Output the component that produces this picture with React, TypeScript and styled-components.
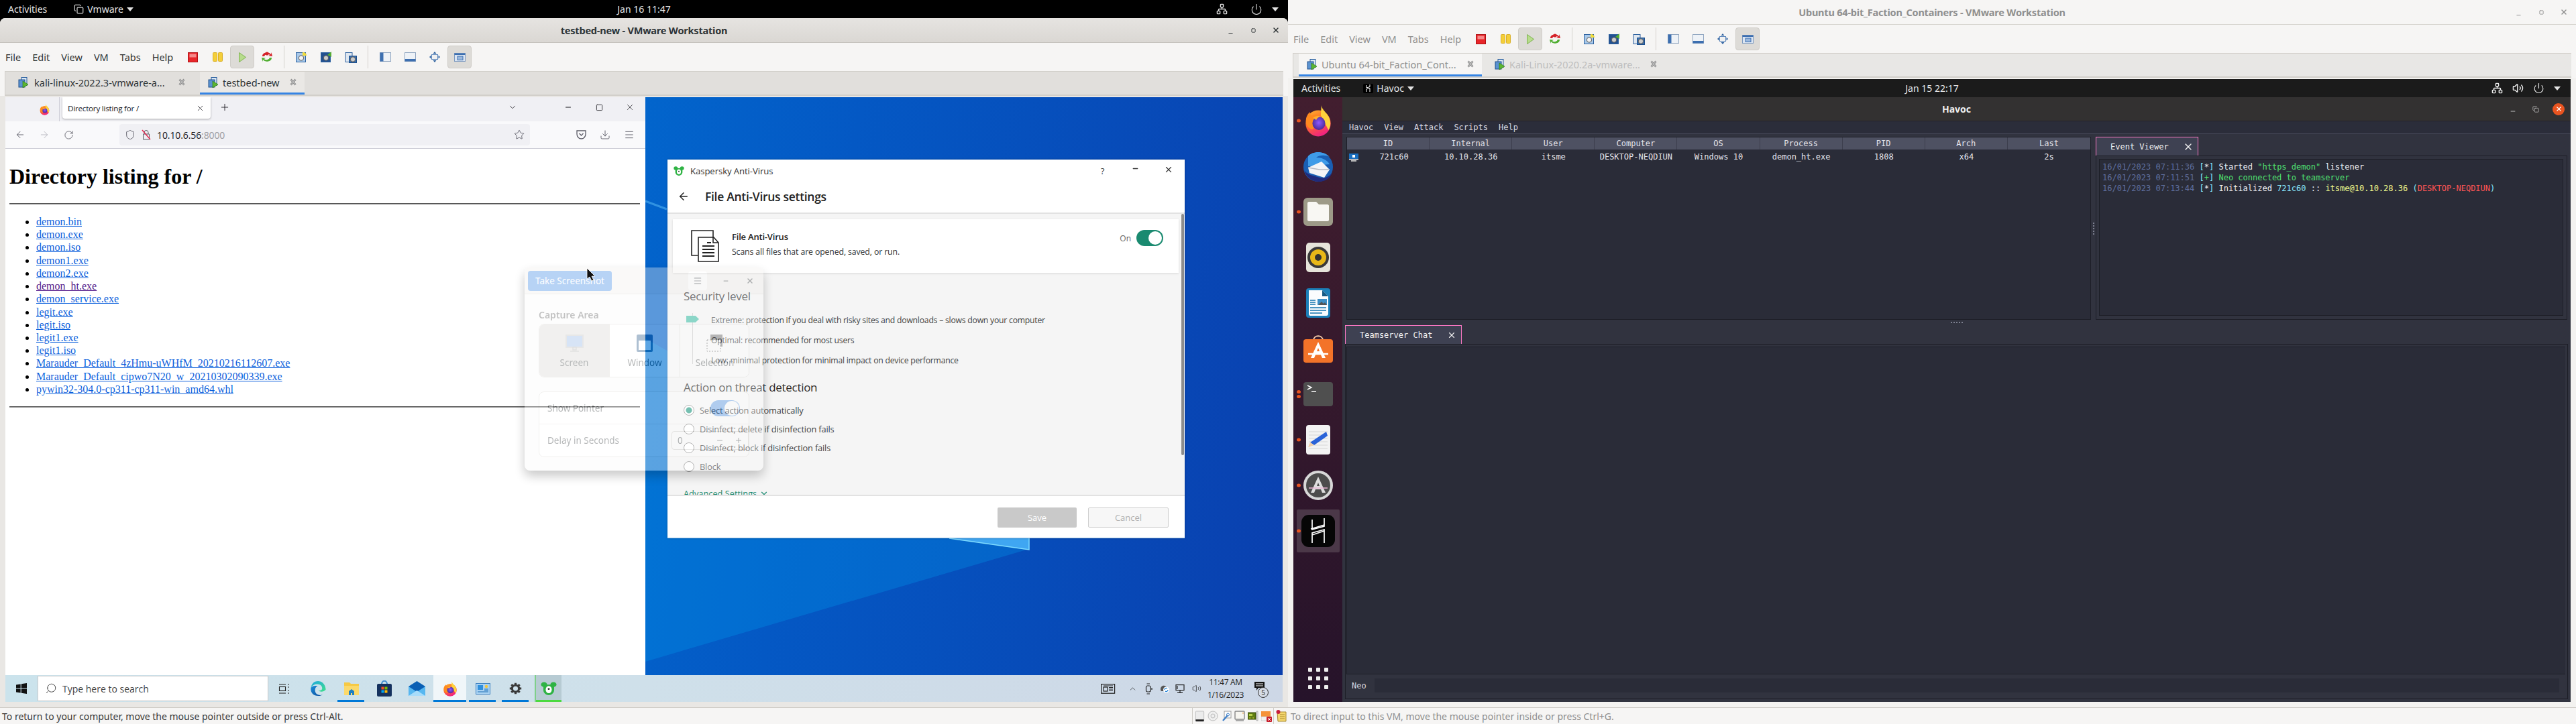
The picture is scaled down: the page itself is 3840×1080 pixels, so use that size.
import React from 'react';
import styled, { createGlobalStyle } from 'styled-components';
import { ArrowLeft, ArrowRight, RotateCw, Shield, Star, Download, Menu as MenuIcon, Plus, ChevronDown, X, Minus, Square, Search, Network, Power, Volume2, Copy, ChevronUp } from 'lucide-react';

const Global = createGlobalStyle`
  html, body { margin: 0; padding: 0; width: 3840px; height: 1080px; overflow: hidden; background: #000; }
  * { box-sizing: border-box; }
  #root { width: 3840px; height: 1080px; }
`;

const ui = `"Noto Sans", "Liberation Sans", sans-serif`;
const win = `"Open Sans", "Liberation Sans", sans-serif`;
const mono = `"DejaVu Sans Mono", "Liberation Mono", monospace`;
const serif = `"Liberation Serif", serif`;

const Screen = styled.div`display: grid; grid-template-columns: 1920px 1920px; height: 1080px; font-family: ${ui};`;
const LeftHost = styled.div`display: flex; flex-direction: column; background: #000; height: 1080px; min-width: 0;`;

const TopBar = styled.div<{ $dark?: boolean }>`
  display: grid; grid-template-columns: 1fr auto 1fr; align-items: center; height: 27px; flex: none;
  background: ${p => (p.$dark ? '#1b1b1b' : '#000')}; color: #e4e4e4; font-size: 14px; font-family: ${ui};
`;
const BarLeft = styled.div<{ $pad: number; $gap: number }>`display: flex; align-items: center; padding-left: ${p => p.$pad}px; gap: ${p => p.$gap}px;`;
const BarApp = styled.div`display: flex; align-items: center; gap: 5px;`;
const BarRight = styled.div<{ $pad: number }>`display: flex; align-items: center; justify-content: flex-end; gap: 14px; padding-right: ${p => p.$pad}px;`;
const Caret = styled.span`width: 0; height: 0; border-left: 5px solid transparent; border-right: 5px solid transparent; border-top: 6px solid #e4e4e4;`;

const HostWindow = styled.div<{ $on?: boolean }>`
  flex: 1; display: flex; flex-direction: column; min-height: 0; height: 100%;
  background: #f6f5f4; border-radius: ${p => (p.$on ? '8px 8px 0 0' : '0')}; overflow: hidden;
  color: ${p => (p.$on ? '#2e3436' : '#8f8f8f')};
`;
const TitleBar = styled.div<{ $on?: boolean }>`
  height: 37px; flex: none; display: grid; grid-template-columns: 1fr auto 1fr; align-items: center;
  background: ${p => (p.$on ? 'linear-gradient(#e6e4e1,#dad7d3)' : '#f6f5f4')};
  border-bottom: 1px solid ${p => (p.$on ? '#c4c1bc' : '#d8d5d0')};
`;
const TitleText = styled.div`grid-column: 2; font-size: 14.5px; font-weight: 700; letter-spacing: -0.2px; white-space: nowrap;`;
const WinControls = styled.div`grid-column: 3; display: flex; justify-content: flex-end; padding-right: 1px;`;
const WinControl = styled.span`width: 34px; display: flex; align-items: center; justify-content: center;`;
const Toolbar = styled.div`height: 42px; flex: none; display: flex; align-items: center; background: #f6f5f4; padding-left: 8px;`;
const MenuList = styled.div`width: 261px; display: flex; gap: 17px; font-size: 14.5px; flex: none;`;
const MenuLabel = styled.span``;
const ToolBtn = styled.span<{ $active?: boolean }>`
  width: 36px; height: 34px; margin-right: 1px; display: flex; align-items: center; justify-content: center; border-radius: 4px;
  background: ${p => (p.$active ? '#dddbd7' : 'transparent')}; border: 1px solid ${p => (p.$active ? '#cfccc7' : 'transparent')};
`;
const ToolSep = styled.span`width: 1px; height: 34px; background: #d4d1cc; margin: 0 7px 0 6px;`;
const TabBar = styled.div<{ $on?: boolean; $pad: number }>`
  height: 37px; flex: none; display: flex; margin-left: 7px; margin-right: 7px; padding-left: ${p => p.$pad}px;
  background: ${p => (p.$on ? '#e1dfdc' : '#e8e7e5')}; border-top: 1px solid #d2cfca; border-left: 1px solid #d2cfca; border-bottom: 2px solid #d2cfca;
`;
const HostTab = styled.div<{ $w: number; $active?: boolean; $on?: boolean }>`
  width: ${p => p.$w}px; display: flex; align-items: center; padding-left: ${p => (p.$active ? 12 : 19)}px; padding-right: ${p => (p.$active ? 12 : 22)}px;
  background: ${p => (p.$active ? (p.$on ? '#eae8e5' : '#f6f5f4') : 'transparent')};
  border-bottom: 3px solid ${p => (p.$active ? '#3584e4' : 'transparent')};
`;
const TabTitle = styled.span<{ $dim?: boolean; $gap?: number }>`margin-left: ${p => p.$gap ?? 6}px; font-size: 14.5px; white-space: nowrap; color: ${p => (p.$dim ? '#bdbdbd' : 'inherit')};`;
const TabClose = styled.span`margin-left: auto; display: flex; color: #8a8a8a;`;
const Well = styled.div<{ $on?: boolean }>`flex: 1; min-height: 0; padding: 2px 8px 8px; display: flex; flex-direction: column; background: ${p => (p.$on ? '#e9e7e4' : '#f3f2f0')};`;
const StatusBar = styled.div`height: 25px; flex: none; border-top: 1px solid #cfccc7; display: flex; align-items: center; background: #f6f5f4; font-size: 14px;`;
const StatusText = styled.span<{ $dim?: boolean }>`padding-left: ${p => (p.$dim ? 4 : 3)}px; white-space: nowrap; color: ${p => (p.$dim ? '#8f8f8f' : '#3a3a3a')};`;
const StatusIcons = styled.div`margin-left: auto; height: 100%; display: flex; align-items: center; border-left: 1px solid #cfccc7;`;
const StatusIcon = styled.span`width: 20px; display: flex; justify-content: center;`;
const StatusNote = styled.span`width: 22px; display: flex; justify-content: center; border-left: 1px solid #cfccc7; height: 100%; align-items: center;`;

/* Windows guest */
const Guest = styled.div`flex: 1; min-height: 0; display: flex; flex-direction: column; position: relative; overflow: hidden;
  background: linear-gradient(100deg, #0092e8 0%, #0074d6 28%, #0458c4 62%, #0a3fae 100%);`;
const WallpaperArt = styled.svg`position: absolute; left: 0; top: 0; width: 1904px; height: 902px;`;
const GuestArea = styled.div`flex: 1; min-height: 0; display: flex; position: relative;`;
const Firefox = styled.div`width: 954px; display: flex; flex-direction: column; background: #fff; position: relative; font-family: ${win};`;
const FfTabs = styled.div`height: 36px; flex: none; display: flex; align-items: flex-start; background: #f0f0f4; color: #15141a;`;
const FfLogoBox = styled.div`width: 81px; height: 36px; display: flex; align-items: center; justify-content: center; padding-left: 37px; border-right: 1px solid #cfcfd8;`;
const FfTab = styled.div`width: 221px; height: 32px; margin-left: 4px; background: #fff; border-radius: 0 0 4px 4px; box-shadow: 0 1px 3px rgba(0,0,0,.3); display: flex; align-items: center; padding: 0 9px 0 8px; font-size: 11.6px; letter-spacing: -0.2px; justify-content: space-between;`;
const FfPlus = styled.span`margin-left: 13px; height: 30px; display: flex; align-items: center;`;
const FfSpacer = styled.span`flex: 1;`;
const FfCtl = styled.span<{ $mr?: number }>`width: 46px; height: 30px; display: flex; align-items: center; justify-content: center; margin-right: ${p => p.$mr || 0}px;`;
const FfNav = styled.div`height: 41px; flex: none; display: flex; align-items: center; background: #f9f9fb; border-bottom: 1px solid #cfcfd8; color: #5b5b66;`;
const FfNavBtn = styled.span<{ $dim?: boolean }>`width: 36px; display: flex; justify-content: center; color: ${p => (p.$dim ? '#b6b6bd' : '#5b5b66')};`;
const UrlBar = styled.div`width: 612px; height: 32px; margin-left: 58px; border-radius: 4px; background: #f0f0f4; display: flex; align-items: center; padding: 0 8px; gap: 8px; margin-right: 58px;`;
const UrlText = styled.span`font-size: 14px; color: #15141a; letter-spacing: -0.1px;`;
const UrlPort = styled.span`color: #9a9aa0;`;
const UrlStar = styled.span`margin-left: auto; display: flex;`;
const Page = styled.div`flex: 1; min-height: 0; background: #fff; padding: 0 8px 0 6px; font-family: ${serif}; color: #000; overflow: hidden;`;
const PageTitle = styled.h1`font-size: 32px; font-weight: 700; margin: 23px 0 21px; line-height: 37px;`;
const PageRule = styled.hr`margin: 0; border: 0; border-top: 1px solid #555; border-bottom: 1px solid #8a8a8a;`;
const FileList = styled.ul`margin: 16px 0; padding-left: 40px; font-size: 16px;`;
const FileItem = styled.li`height: 19.23px; line-height: 19.23px;`;
const FileLink = styled.a<{ $seen?: boolean }>`color: ${p => (p.$seen ? '#551a8b' : '#0b5fdc')}; text-decoration: underline;`;

/* Kaspersky */
const Kaspersky = styled.div`position: absolute; left: 987px; top: 93px; width: 771px; height: 565px; background: #fff; display: flex; flex-direction: column; font-family: ${win}; color: #222; border-bottom: 1px solid #9cc5e8; box-shadow: 0 0 3px rgba(0,0,0,.25);`;
const KHead = styled.div`height: 81px; flex: none; border-bottom: 2px solid #e2e2e2; padding: 0 0 0 9px; display: flex; flex-direction: column;`;
const KTitleRow = styled.div`height: 34px; display: flex; align-items: center; font-size: 13.2px; letter-spacing: -0.1px; color: #333; gap: 9px;`;
const KCtl = styled.span`width: 49px; text-align: center; display: flex; justify-content: center;`;
const KCtlGroup = styled.div`margin-left: auto; display: flex;`;
const KHeading = styled.div`display: flex; align-items: center; height: 42px; padding-left: 6px; font-size: 17.5px; font-weight: 600; letter-spacing: -0.3px; gap: 23px;`;
const KBody = styled.div`flex: 1; min-height: 0; background: #f5f5f5; position: relative; overflow: hidden; padding: 8px 9px 0 8px;`;
const KCard = styled.div`height: 80px; background: #fff; box-shadow: 0 1px 3px rgba(0,0,0,.12); display: flex; align-items: flex-start; padding: 16px 23px 0 27px;`;
const KCardText = styled.div`margin-left: 19px; flex: 1;`;
const KCardName = styled.div`font-size: 13px; font-weight: 600; letter-spacing: -0.2px; line-height: 20px;`;
const KCardDesc = styled.div`font-size: 12.3px; letter-spacing: -0.12px; margin-top: 4px; line-height: 18px; color: #333;`;
const KOnLabel = styled.span`font-size: 12px; color: #666; margin: 4px 8px 0 0;`;
const KToggle = styled.span`width: 40px; height: 24px; border-radius: 12px; background: #1a8a70; display: flex; justify-content: flex-end; align-items: center; padding-right: 2px;`;
const KKnob = styled.span`width: 20px; height: 20px; border-radius: 50%; background: #fff;`;
const KSection = styled.div<{ $top: number }>`font-size: 17px; font-weight: 500; line-height: 24px; color: #2b2b2b; margin: ${p => p.$top}px 0 0 16px; letter-spacing: -0.3px;`;
const KLevels = styled.div`position: relative; padding-left: 57px; margin-top: 9px;`;
const KLevel = styled.div`height: 30px; line-height: 30px; font-size: 12.2px; letter-spacing: -0.22px; color: #444;`;
const KTrack = styled.span`position: absolute; left: 29px; top: 4px; width: 1px; height: 76px; background: #c9c9c9;`;
const KThumb = styled.span`position: absolute; left: 20px; top: 8px; width: 19px; height: 10px; background: #4fc3ad; clip-path: polygon(0 0, 72% 0, 100% 50%, 72% 100%, 0 100%);`;
const KRadios = styled.div`margin: 8px 0 0 16px;`;
const KRadioRow = styled.div`height: 28px; display: flex; align-items: center; gap: 8px; font-size: 12.8px; color: #444; letter-spacing: -0.15px;`;
const KRadio = styled.span<{ $on?: boolean }>`width: 16px; height: 16px; border-radius: 50%; border: 1px solid #8c8c8c; background: ${p => (p.$on ? 'radial-gradient(circle, #2a9d86 0 4px, #fff 5px)' : '#fff')};`;
const KAdvanced = styled.div`margin: 16px 0 0 16px; color: #1a8a70; font-size: 12.8px; line-height: 20px; display: flex; align-items: center; gap: 4px;`;
const KScroll = styled.span`position: absolute; right: 1px; top: 0; width: 4px; height: 360px; background: #8c8c8c; border-radius: 2px;`;
const KFoot = styled.div`height: 64px; flex: none; border-top: 2px solid #e2e2e2; display: flex; align-items: flex-start; justify-content: flex-end; gap: 17px; padding: 17px 24px 0 0;`;
const KBtn = styled.span<{ $primary?: boolean }>`
  height: 30px; width: ${p => (p.$primary ? 118 : 120)}px; border-radius: 2px; display: flex; align-items: center; justify-content: center; font-size: 13px;
  background: ${p => (p.$primary ? '#c9c9c9' : '#f7f7f7')}; color: ${p => (p.$primary ? '#fff' : '#b0b0b0')}; border: ${p => (p.$primary ? 'none' : '1px solid #cfcfcf')};
`;

/* fading gnome screenshot dialog */
const ShotDialog = styled.div`position: absolute; left: 774px; top: 254px; width: 356px; height: 303px; background: #fafafa; opacity: .36; border-radius: 8px; box-shadow: 0 8px 16px rgba(0,0,0,.6); display: flex; flex-direction: column; font-family: ${ui}; color: #2e3436;`;
const ShotHead = styled.div`height: 40px; flex: none; display: flex; align-items: center; padding: 0 2px 0 5px; border-bottom: 1px solid #d8d5d0; background: #f0eeec; border-radius: 8px 8px 0 0;`;
const ShotBtn = styled.span`width: 125px; height: 30px; background: #3584e4; color: #fff; border-radius: 4px; font-size: 13.5px; display: flex; align-items: center; justify-content: center;`;
const ShotMenu = styled.span`width: 28px; height: 28px; margin-left: auto; background: #fff; border-radius: 4px; display: flex; align-items: center; justify-content: center;`;
const ShotCtl = styled.span`width: 36px; display: flex; justify-content: center;`;
const ShotBody = styled.div`flex: 1; padding: 21px 21px 0;`;
const ShotLabel = styled.div`font-size: 14px; line-height: 20px; font-weight: 600; color: #555;`;
const ShotSeg = styled.div`display: grid; grid-template-columns: 105px 105px 104px; height: 80px; margin-top: 3px; border: 1px solid #d8d5d0; border-radius: 8px; overflow: hidden; background: #fff;`;
const ShotOpt = styled.div<{ $on?: boolean }>`display: flex; flex-direction: column; align-items: center; justify-content: center; gap: 7px; padding-top: 2px; font-size: 13.5px; line-height: 18px; background: ${p => (p.$on ? '#d8d6d2' : '#fff')}; border-right: 1px solid #d8d5d0;`;
const ShotList = styled.div`margin-top: 21px; border: 1px solid #d8d5d0; border-radius: 8px; background: #fff;`;
const ShotRow = styled.div`height: 48px; display: flex; align-items: center; padding: 0 12px; font-size: 13.5px; justify-content: space-between; border-bottom: 1px solid #e3e1de; &:last-child { border-bottom: 0; padding-right: 0; }`;
const ShotSwitch = styled.span`width: 44px; height: 24px; border-radius: 12px; background: #3584e4; display: flex; justify-content: flex-end; padding: 1px; margin-right: 1px;`;
const ShotSwitchKnob = styled.span`width: 22px; height: 22px; background: #fff; border-radius: 50%;`;
const ShotSpin = styled.span`width: 115px; height: 28px; border: 1px solid #c8c5c0; border-radius: 4px; display: flex; align-items: center; justify-content: space-between; padding: 0 8px;`;
const CursorArt = styled.svg`position: absolute; left: 866px; top: 255px;`;

/* taskbar */
const Taskbar = styled.div`height: 40px; flex: none; display: flex; align-items: center; position: relative; font-family: ${win}; background: linear-gradient(90deg, #cbe3ec, #cfe0ea 50%, #cdd7e6 100%);`;
const StartBtn = styled.span`width: 48px; display: flex; justify-content: center;`;
const SearchBox = styled.div`width: 344px; height: 38px; background: #fff; border: 1px solid #c8c8c8; display: flex; align-items: center; gap: 8px; padding-left: 10px; color: #444; font-size: 14px;`;
const TaskView = styled.span`width: 46px; margin-right: 4px; display: flex; justify-content: center;`;
const TaskItem = styled.span<{ $run?: boolean; $cur?: boolean; $kas?: boolean }>`
  width: 49px; height: 40px; display: flex; align-items: center; justify-content: center; position: relative;
  background: ${p => (p.$cur ? 'rgba(255,255,255,.7)' : p.$kas ? '#b7cbd3' : 'transparent')};
  ${p => (p.$kas ? 'margin-left: 4px; width: 40px; border-left: 2px solid #7fd08a; margin-right: 5px;' : '')}
  &::after { content: ''; display: ${p => (p.$run || p.$kas ? 'block' : 'none')}; position: absolute; bottom: 0; left: ${p => (p.$cur || p.$kas ? 0 : 4)}px; right: ${p => (p.$cur || p.$kas ? 0 : 5)}px; height: 3px; background: ${p => (p.$kas ? '#4cd93f' : '#0078d7')}; }
`;
const Tray = styled.div`margin-left: auto; display: flex; align-items: center; padding-right: 22px;`;
const TrayBox = styled.span<{ $ml?: number }>`width: 24px; display: flex; justify-content: center; margin-left: ${p => p.$ml || 0}px;`;
const TrayClock = styled.div`width: 62px; text-align: center; font-size: 12px; line-height: 19px; color: #222; letter-spacing: -0.3px;`;
const TrayNote = styled.span`width: 20px; height: 28px; margin-left: 12px; position: relative; display: block;`;
const TrayBadge = styled.span`position: absolute; left: 5px; top: 12px; width: 16px; height: 16px; border-radius: 50%; border: 1px solid #333; font-size: 10px; display: flex; align-items: center; justify-content: center; background: #d5dbe6; color: #222;`;

/* Ubuntu guest */
const UbuntuDesk = styled.div`flex: 1; display: flex; min-height: 0; background: #2b2d39;`;
const Dock = styled.div`width: 73px; flex: none; display: flex; flex-direction: column; align-items: center; padding-top: 1px; background: linear-gradient(#421e2f, #26132a);`;
const DockItem = styled.div<{ $on?: boolean }>`width: 64px; height: 68px; display: flex; align-items: center; justify-content: center; position: relative; ${p => (p.$on ? 'background: #4b3848; border-radius: 2px; height: 64px; margin-top: 2px;' : '')}`;
const DockDots = styled.span`position: absolute; left: 0; top: 50%; transform: translateY(-50%); display: flex; flex-direction: column; gap: 2px;`;
const DockDot = styled.span`width: 6px; height: 5px; border-radius: 50%; background: #e95420;`;
const AppGrid = styled.div`margin-top: auto; margin-bottom: 19px; display: grid; grid-template-columns: repeat(3, 6px); gap: 7px 6px;`;
const AppDot = styled.span`width: 6px; height: 6px; background: #eee; border-radius: 1px;`;
const Havoc = styled.div`flex: 1; min-width: 0; display: flex; flex-direction: column; background: #31333f; font-family: ${mono}; font-size: 12px; color: #d9d9e0;`;
const HavocTitle = styled.div`height: 36px; flex: none; background: #333131; display: grid; grid-template-columns: 1fr auto 1fr; align-items: center; color: #eee; border-bottom: 1px solid #22232b;`;
const HavocName = styled.div`grid-column: 2; font-family: ${ui}; font-weight: 700; font-size: 14px;`;
const HavocCtls = styled.div`grid-column: 3; display: flex; justify-content: flex-end; align-items: center; padding-right: 9px; gap: 16px;`;
const HavocCtl = styled.span`width: 18px; display: flex; justify-content: center; color: #ddd;`;
const HavocClose = styled.span`width: 18px; height: 18px; border-radius: 50%; background: #e95420; color: #fff; display: flex; align-items: center; justify-content: center;`;
const HavocMenu = styled.div`height: 19px; flex: none; display: flex; align-items: center; gap: 16px; padding-left: 10px; background: #2b2d3a; border-bottom: 1px solid #454757;`;
const TopSplit = styled.div`height: 277px; flex: none; display: flex; padding: 4px 5px 0 6px;`;
const SessionPane = styled.div`width: 1110px; flex: none; background: #2a2c38; border: 1px solid #1d1e27;`;
const SessionHead = styled.div`display: grid; grid-template-columns: repeat(9, 1fr); height: 18px; background: #4e5162; color: #e3e3ea;`;
const SessionHeadCell = styled.div`text-align: center; line-height: 18px; border-right: 1px solid #3c3e4d; &:last-child { border-right: 0; }`;
const SessionRow = styled.div`display: grid; grid-template-columns: repeat(9, 1fr); height: 22px; align-items: center; padding-top: 1px;`;
const SessionCell = styled.div`text-align: center; line-height: 19px; color: #e3e3ea; display: flex; align-items: center; justify-content: center; white-space: nowrap;`;
const SessionIdText = styled.span`flex: 1; text-align: center;`;
const VGrip = styled.div`width: 7px; flex: none; display: flex; align-items: center; justify-content: center;`;
const VGripDots = styled.span`width: 2px; height: 18px; border-left: 2px dotted #7d8090;`;
const EventPane = styled.div`flex: 1; min-width: 0; display: flex; flex-direction: column; height: 273px;`;
const PaneTabs = styled.div`display: flex; height: 28px; flex: none;`;
const PaneTab = styled.div<{ $w: number; $pl: number; $pr: number }>`
  width: ${p => p.$w}px; height: 28px; background: #3e4152; border: 1px solid #ff79c6; border-bottom: 0; display: flex; align-items: center; justify-content: space-between;
  padding: 0 ${p => p.$pr}px 0 ${p => p.$pl}px; color: #f0f0f0;
`;
const PaneBody = styled.div`flex: 1; min-height: 0; border: 1px solid #1d1e27; padding: 4px 5px 5px 4px; background: #31333f;`;
const LogBox = styled.div`height: 100%; background: #2a2c38; border: 1px solid #1d1e27; padding: 3px 4px;`;
const LogLine = styled.div`line-height: 16px; white-space: pre;`;
const LogSpan = styled.span<{ $c: string }>`color: ${p => p.$c};`;
const HGrip = styled.div`height: 8px; flex: none; display: flex; align-items: center; justify-content: center;`;
const HGripDots = styled.span`width: 18px; height: 2px; border-top: 2px dotted #7d8090;`;
const ChatPane = styled.div`flex: 1; min-height: 0; display: flex; flex-direction: column; padding: 0 4px;`;
const ChatBody = styled.div`flex: 1; min-height: 0; display: flex; flex-direction: column; border: 1px solid #1d1e27; padding: 3px 3px 3px 1px; margin-bottom: 4px;`;
const ChatLog = styled.div`flex: 1; background: #2a2c38; border: 1px solid #1d1e27; border-right: 0;`;
const ChatInputRow = styled.div`height: 33px; flex: none; display: flex; align-items: center; padding: 0 9px 0 8px; gap: 12px;`;
const ChatInput = styled.div`flex: 1; height: 21px; background: #2a2c38;`;

/* ---------- icons ---------- */
const FirefoxLogo = ({ w = 24, h = 24 }: { w?: number; h?: number }) => (
  <svg width={w} height={h} viewBox="0 0 48 48" preserveAspectRatio="none">
    <defs>
      <linearGradient id="ffa" x1="0" y1="0" x2="0.5" y2="1"><stop offset="0" stopColor="#ffbd2e" /><stop offset=".5" stopColor="#ff6a2a" /><stop offset="1" stopColor="#f0247e" /></linearGradient>
      <radialGradient id="ffb" cx=".5" cy=".45" r=".6"><stop offset="0" stopColor="#9059ff" /><stop offset="1" stopColor="#45278d" /></radialGradient>
    </defs>
    <circle cx="24" cy="28" r="19.5" fill="url(#ffa)" />
    <path d="M29 1c1 9 14 13 14 27 0 4-1 7-3 10L28 16z" fill="#ffd23b" />
    <path d="M5 24c0-6 3-10 6-13 0 4 2 5 5 5 3-2 7-2 10 0-6 0-8 3-9 8 0 3 2 6 5 7l-7 6C9 36 5 31 5 24z" fill="#ff8a1f" />
    <circle cx="25" cy="28" r="10" fill="url(#ffb)" />
    <path d="M16 20c3-3 9-4 13-2-4 0-7 2-8 5z" fill="#ffb02e" />
  </svg>
);
const Thunderbird = () => (
  <svg width="46" height="48" viewBox="0 0 46 48">
    <circle cx="23" cy="25" r="22" fill="#1a5fb4" />
    <path d="M8 9C14 2 30 0 40 10 34 7 25 7 20 11c8 0 16 3 20 10L8 24z" fill="#3f9be8" />
    <path d="M8 26l20-9 12 12-8 12-22-7z" fill="#f4f4f6" />
    <path d="M8 26l17 3 15 0" stroke="#b8bac2" strokeWidth="1.5" fill="none" />
    <path d="M2 30c3 10 12 17 22 17 10 0 16-5 20-13-6 6-12 9-18 7C14 38 6 36 2 30z" fill="#202a7c" />
  </svg>
);
const FolderApp = () => (
  <svg width="46" height="44" viewBox="0 0 46 44">
    <rect x="1" y="1" width="44" height="42" rx="6" fill="#9d9a88" />
    <path d="M7 9c0-1 1-2 2-2h11l4 4h13c1 0 2 1 2 2v21c0 1-1 2-2 2H9c-1 0-2-1-2-2z" fill="#f8f7f3" />
  </svg>
);
const SpeakerApp = () => (
  <svg width="38" height="44" viewBox="0 0 38 44">
    <rect x="1" y="0" width="36" height="44" rx="5" fill="#e6e4da" />
    <ellipse cx="19" cy="22" rx="16" ry="16" fill="#3a3a3a" /><circle cx="19" cy="22" r="12" fill="#e8b818" /><circle cx="19" cy="22" r="5" fill="#333" />
  </svg>
);
const WriterApp = () => (
  <svg width="38" height="44" viewBox="0 0 38 44">
    <rect x="1" y="0" width="36" height="44" rx="4" fill="#1b7fb8" />
    <path d="M5 3h20l9 9v26c0 2-1 3-3 3H7c-1 0-2-1-2-3z" fill="#fafcfe" />
    <path d="M25 3l9 9h-9z" fill="#155a85" />
    <rect x="18" y="16" width="14" height="9" fill="#3d8fc6" /><path d="M19 25l5-5 3 3 2-2 3 4z" fill="#555" />
    <path d="M7 18h8M7 21h8M7 24h8M7 29h24M7 33h24M7 37h18" stroke="#1273ad" strokeWidth="1.6" />
  </svg>
);
const StoreApp = () => (
  <svg width="46" height="44" viewBox="0 0 46 44">
    <path d="M16 10c0-9 14-9 14 0" stroke="#f2c9a8" strokeWidth="2" fill="none" />
    <rect x="1" y="8" width="44" height="35" rx="4" fill="#f37329" />
    <path d="M23 12L12 36h5l2.5-6h7l2.5 6h5zm0 9l2 5h-4z" fill="#fff" />
    <path d="M8 30h30" stroke="#fff" strokeWidth="2.5" />
  </svg>
);
const TerminalApp = () => (
  <svg width="46" height="38" viewBox="0 0 46 38">
    <rect x="1" y="1" width="44" height="36" rx="4" fill="#4f4f4f" />
    <path d="M7 6l6 3-6 3M13 15h7" stroke="#fff" strokeWidth="1.4" fill="none" />
  </svg>
);
const EditorApp = () => (
  <svg width="38" height="44" viewBox="0 0 38 44">
    <rect x="1" y="0" width="36" height="44" rx="4" fill="#f3f3f3" />
    <path d="M5 10h28M5 15h28M5 20h28M5 25h28M5 30h28M5 35h28" stroke="#d5d5d5" />
    <path d="M31 10l2 6-20 14-6-4z" fill="#2b63d8" /><path d="M7 26l6 4-9 3z" fill="#f2cfa8" />
  </svg>
);
const UpdaterApp = () => (
  <svg width="46" height="46" viewBox="0 0 46 46">
    <circle cx="23" cy="23" r="20" fill="#4c4c4c" stroke="#d8d8d8" strokeWidth="4" />
    <path d="M23 10L12 34h5l2-5h8l2 5h5zm0 9l2 5h-4z" fill="#ddd" />
    <path d="M9 27h28" stroke="#e8b4d4" strokeWidth="1.5" />
  </svg>
);
const HavocApp = () => (
  <svg width="50" height="48" viewBox="0 0 50 48">
    <rect x="0" y="0" width="50" height="48" rx="11" fill="#060606" />
    <path d="M16 7v15l18-5V5M16 42V27l18-5v20M14 21l20-6M16 30l18-6" stroke="#fff" strokeWidth="1.7" fill="none" />
  </svg>
);
const VmTabIcon = () => (
  <svg width="16" height="16" viewBox="0 0 16 16">
    <rect x="5" y="0.5" width="8" height="12" fill="#dbe7f3" stroke="#2a5f9e" />
    <rect x="1" y="4" width="9" height="11" fill="#5a92d0" stroke="#1d4f8c" />
    <path d="M7 6l8 5-8 5z" fill="#5cb531" stroke="#2f7d18" strokeWidth=".7" />
  </svg>
);
const CloseGlyph = () => (
  <svg width="10" height="11" viewBox="0 0 10 11"><path d="M1.5 1.5l7 8M8.5 1.5l-7 8" stroke="#8d8d8d" strokeWidth="2.8" /><path d="M1.5 1.5l7 8M8.5 1.5l-7 8" stroke="#ddd" strokeWidth=".8" /></svg>
);
const StopIcon = () => (<svg width="15" height="15" viewBox="0 0 15 15"><rect x=".5" y=".5" width="14" height="14" fill="#e8262a" stroke="#b01014" /><rect x="2.5" y="2.5" width="10" height="5" fill="#f58a8a" /></svg>);
const PauseIcon = () => (<svg width="15" height="14" viewBox="0 0 15 14"><rect x=".5" y=".5" width="6" height="13" rx="1" fill="#f4cf3a" stroke="#d9ae26" /><rect x="8.5" y=".5" width="6" height="13" rx="1" fill="#f4cf3a" stroke="#d9ae26" /></svg>);
const PlayIcon = () => (<svg width="11" height="15" viewBox="0 0 11 15"><path d="M.5.5l10 7-10 7z" fill="#b7dc8c" stroke="#7eb350" /></svg>);
const RestartIcon = () => (<svg width="18" height="16" viewBox="0 0 18 16"><path d="M2 7a7 5.5 0 0113-3l.5-3L17 7l-6-.7 2.4-1.3A5 4 0 005 7z" fill="#d5232a" /><circle cx="9" cy="3" r="2.6" fill="#d5232a" /><path d="M16 9a7 5.5 0 01-13 3l-.5 3L1 9l6 .7L4.6 11A5 4 0 0013 9z" fill="#4fae30" /></svg>);
const SnapIcon = ({ k }: { k: number }) => (
  <svg width="18" height="17" viewBox="0 0 18 17">
    <rect x={k === 2 ? 1 : 1.5} y="1.5" width={k === 2 ? 10 : 14} height="14" fill={k === 0 ? '#a9c9ea' : k === 1 ? '#23508f' : '#dfe7f0'} stroke="#2a5f9e" />
    {k === 2 && <rect x="6.5" y="6.5" width="11" height="10" fill="#3a6fae" stroke="#1d4f8c" />}
    <circle cx={k === 2 ? 12 : 9} cy={k === 2 ? 11.5 : 9.5} r="3.7" fill={k === 0 ? '#f5f5f5' : '#ccc'} stroke="#555" />
    {k === 0 && <path d="M11 1a5 5 0 016 5h-6z" fill="#f2dc3a" />}
    {k === 1 && <path d="M11 5l6-5v8z" fill="#55ae30" />}
  </svg>
);
const SideIcon = ({ k }: { k: number }) => (
  <svg width="17" height="14" viewBox="0 0 17 14">
    <rect x=".5" y=".5" width="16" height="13" fill="#eef2f7" stroke="#8fa5c0" />
    {k === 0 ? <rect x=".5" y=".5" width="5" height="13" fill="#3d6fb0" /> : <rect x=".5" y="10" width="16" height="3.5" fill="#3d6fb0" />}
  </svg>
);
const FitIcon = () => (
  <svg width="16" height="16" viewBox="0 0 16 16">
    <rect x="3.5" y="4.5" width="9" height="7" fill="#f1f1f1" stroke="#5a84ba" />
    <path d="M8 0l2.5 3h-5zM8 16l2.5-3h-5zM0 8l2.5-2.5v5zM16 8l-2.5-2.5v5z" fill="#2a5f9e" />
  </svg>
);
const FullIcon = () => (
  <svg width="17" height="13" viewBox="0 0 17 13">
    <rect x=".5" y=".5" width="16" height="12" fill="#dbe5f2" stroke="#7e9bc0" /><rect x=".5" y=".5" width="16" height="2.5" fill="#3d6fb0" /><rect x="5" y="5" width="8" height="5.5" fill="#9ab8dd" stroke="#3d6fb0" />
  </svg>
);
const WinLogo = () => (<svg width="16" height="16" viewBox="0 0 18 20" preserveAspectRatio="none"><path d="M0 3l7.5-1.2v7.6H0zM8.7 1.6L18 0v9.4H8.7zM0 10.6h7.5v7.6L0 17zM8.7 10.6H18V20l-9.3-1.6z" fill="#111" /></svg>);
const TaskViewIcon = () => (<svg width="17" height="15" viewBox="0 0 17 15" fill="none" stroke="#222" strokeWidth="1.1"><path d="M1 1h10M14 1h2M1 14h10M14 14h2M14 5h2M14 10h2" /><rect x="1.5" y="4.5" width="9" height="6" /></svg>);
const EdgeIcon = () => (
  <svg width="25" height="24" viewBox="0 0 26 26">
    <defs>
      <linearGradient id="eg" x1="0" y1="0" x2="1" y2="1"><stop offset="0" stopColor="#1fa8e0" /><stop offset="1" stopColor="#3fe08a" /></linearGradient>
      <linearGradient id="eb" x1="0" y1="0" x2="1" y2="1"><stop offset="0" stopColor="#1a8ad8" /><stop offset="1" stopColor="#0c4f9c" /></linearGradient>
    </defs>
    <path d="M25 15C25 8 20 1 12.5 1 6 1 2 6 1 12c2-4 6-6 10-6 6 0 9 4 8 8-1 2-4 3-6 2 2 3 9 3 12-1z" fill="url(#eg)" />
    <path d="M1 12c-1 8 4 13 12 13 3 0 5-1 7-2-5 2-11 0-12-5-1-4 1-8 4-9-5-1-9 0-11 3z" fill="url(#eb)" />
  </svg>
);
const ExplorerIcon = () => (<svg width="22" height="19" viewBox="0 0 22 19"><path d="M0 0h8l2 2h12v17H0z" fill="#f6c944" /><rect x="0" y="5" width="22" height="14" fill="#fbd96b" /><path d="M7 19v-6l4-3 4 3v6h-3v-3h-2v3z" fill="#1d7fc4" /></svg>);
const StoreWinIcon = () => (<svg width="22" height="24" viewBox="0 0 22 24"><path d="M7 6c0-7 8-7 8 0" stroke="#3f8ed0" strokeWidth="2" fill="none" /><rect x="0" y="5" width="22" height="19" rx="2" fill="#14315e" /><rect x="6.5" y="9.5" width="4" height="4" fill="#f25022" /><rect x="11.5" y="9.5" width="4" height="4" fill="#7fba00" /><rect x="6.5" y="14.5" width="4" height="4" fill="#00a4ef" /><rect x="11.5" y="14.5" width="4" height="4" fill="#ffb900" /></svg>);
const MailIcon = () => (<svg width="25" height="22" viewBox="0 0 25 22"><path d="M12.5 0L25 8v14H0V8z" fill="#0a5fb4" /><path d="M0 8l12.5 8L25 8v14H0z" fill="#57b7f0" /><path d="M0 22l12.5-8L25 22z" fill="#a8dcfa" /></svg>);
const PanelIcon = () => (<svg width="22" height="17" viewBox="0 0 22 17"><rect x=".5" y=".5" width="21" height="16" fill="#a9d2f2" stroke="#3b7fc0" /><rect x="3" y="3" width="8" height="7" fill="#2f8fdc" /><circle cx="16" cy="5" r="2.2" fill="#f2c63c" /><path d="M13 9h6M13 11h6M3 13h16" stroke="#1d6fb5" /></svg>);
const GearIcon = () => (
  <svg width="19" height="18" viewBox="0 0 24 24" preserveAspectRatio="none"><circle cx="12" cy="12" r="6.5" fill="none" stroke="#3a3a3a" strokeWidth="4" /><g stroke="#3a3a3a" strokeWidth="4"><path d="M12 1v4M12 19v4M1 12h4M19 12h4M4.2 4.2L7 7M17 17l2.8 2.8M19.8 4.2L17 7M7 17l-2.8 2.8" /></g></svg>
);
const BearIcon = ({ w = 22, h = 22 }: { w?: number; h?: number }) => (
  <svg width={w} height={h} viewBox="0 0 24 24" preserveAspectRatio="none"><circle cx="5" cy="5" r="4.5" fill="#2fb344" /><circle cx="19" cy="5" r="4.5" fill="#2fb344" /><path d="M4 5h16v10c0 5-4 9-8 9s-8-4-8-9z" fill="#2fb344" /><ellipse cx="12" cy="14" rx="4.5" ry="6.5" fill="#fff" /><circle cx="12" cy="13" r="1.5" fill="#222" /></svg>
);
const DocsIcon = () => (
  <svg width="42" height="48" viewBox="0 0 42 48" fill="none" stroke="#222" strokeWidth="1.6"><path d="M10 38H1V1h32v10" /><path d="M11 11h23l7 8v28H11zM33 11v8h8" fill="#fff" /><path d="M17 24h18M17 29h18M17 34h18M17 39h18M24 19h6" strokeWidth="2" /></svg>
);
const MonitorSmall = () => (<svg width="27" height="26" viewBox="0 0 27 26"><rect x="1" y="1" width="25" height="18" fill="#8fb4e6" stroke="#bbb" strokeWidth="2" /><path d="M11 19h5v4h-5zM7 25h13" stroke="#aaa" strokeWidth="1.4" fill="#ccc" /></svg>);
const WindowSmall = () => (<svg width="24" height="26" viewBox="0 0 24 26"><rect x="0" y="0" width="24" height="26" rx="2" fill="#1e4e80" /><rect x="3" y="9" width="18" height="14" fill="#fff" /></svg>);
const SelectSmall = () => (<svg width="26" height="26" viewBox="0 0 26 26"><rect x="6" y="0" width="18" height="18" fill="#444" /><rect x="1" y="8" width="20" height="17" fill="#fff" stroke="#333" strokeDasharray="2 2" /></svg>);
const HddS = () => (<svg width="15" height="17" viewBox="0 0 15 18"><rect x="1" y="1" width="13" height="16" rx="1" fill="#ececec" stroke="#bbb" /><rect x="1" y="14" width="13" height="3" fill="#222" /></svg>);
const CdS = () => (<svg width="16" height="16" viewBox="0 0 16 16"><circle cx="8" cy="8" r="7" fill="#efefef" stroke="#bbb" /><circle cx="8" cy="8" r="3" fill="none" stroke="#bbb" /></svg>);
const NetKeyS = () => (<svg width="15" height="16" viewBox="0 0 15 16"><rect x="4" y="1" width="10" height="10" fill="#fff" stroke="#999" /><path d="M2 15l7-8" stroke="#3f7fc8" strokeWidth="2.4" /><circle cx="9.5" cy="6" r="2" fill="none" stroke="#3f7fc8" /></svg>);
const MonS = () => (<svg width="16" height="16" viewBox="0 0 16 16"><rect x="1" y="1" width="14" height="12" rx="1" fill="#f7f5f0" stroke="#888" strokeWidth="1.4" /><path d="M2 15h12" stroke="#888" strokeWidth="1.4" /><rect x="12" y="3" width="2" height="1.4" fill="#e89a40" /></svg>);
const NicS = () => (<svg width="16" height="16" viewBox="0 0 16 16"><rect x="0" y="3" width="12" height="10" fill="#5f7d12" stroke="#35470a" /><rect x="2" y="5" width="5" height="3" fill="#b7cf4a" /><path d="M2 11h7" stroke="#e8d84a" strokeDasharray="1 1" /><rect x="13" y="1" width="2" height="14" fill="#eee" stroke="#888" strokeWidth=".6" /></svg>);
const AudioS = () => (<svg width="16" height="17" viewBox="0 0 16 17"><rect x="0" y="1" width="14" height="8" fill="#f5933a" /><rect x="0" y="9" width="14" height="6" fill="#f3f3f3" stroke="#bbb" strokeWidth=".6" /><rect x="8" y="9" width="8" height="8" rx="1" fill="#c81e2c" /><path d="M10 11l4 4M14 11l-4 4" stroke="#fff" /></svg>);
const NoteS = () => (<svg width="16" height="18" viewBox="0 0 16 18"><path d="M2 3h13v14H3z" fill="#f5d76e" stroke="#a8892a" /><path d="M6 7h7M6 10h7M6 13h7" stroke="#a8892a" /><circle cx="3.5" cy="3" r="3" fill="#c81e3c" /></svg>);

const StatusTray = () => (
  <StatusIcons>
    <StatusIcon><HddS /></StatusIcon><StatusIcon><CdS /></StatusIcon><StatusIcon><NetKeyS /></StatusIcon><StatusIcon><MonS /></StatusIcon><StatusIcon><NicS /></StatusIcon><StatusIcon><AudioS /></StatusIcon>
    <StatusNote><NoteS /></StatusNote>
  </StatusIcons>
);

const HostControls = () => (
  <WinControls>
    <WinControl><Minus size={9} strokeWidth={3} style={{ marginTop: 8 }} /></WinControl>
    <WinControl><Square size={7} strokeWidth={3} /></WinControl>
    <WinControl><X size={12} strokeWidth={3} /></WinControl>
  </WinControls>
);

const HostToolbar = () => (
  <Toolbar>
    <MenuList>{['File', 'Edit', 'View', 'VM', 'Tabs', 'Help'].map(m => <MenuLabel key={m}>{m}</MenuLabel>)}</MenuList>
    <ToolBtn><StopIcon /></ToolBtn><ToolBtn><PauseIcon /></ToolBtn><ToolBtn $active><PlayIcon /></ToolBtn><ToolBtn><RestartIcon /></ToolBtn>
    <ToolSep />
    <ToolBtn><SnapIcon k={0} /></ToolBtn><ToolBtn><SnapIcon k={1} /></ToolBtn><ToolBtn><SnapIcon k={2} /></ToolBtn>
    <ToolSep />
    <ToolBtn><SideIcon k={0} /></ToolBtn><ToolBtn><SideIcon k={1} /></ToolBtn><ToolBtn><FitIcon /></ToolBtn><ToolBtn $active><FullIcon /></ToolBtn>
  </Toolbar>
);

const files = ['demon.bin', 'demon.exe', 'demon.iso', 'demon1.exe', 'demon2.exe', 'demon_ht.exe', 'demon_service.exe', 'legit.exe', 'legit.iso', 'legit1.exe', 'legit1.iso', 'Marauder_Default_4zHmu-uWHfM_20210216112607.exe', 'Marauder_Default_cipwo7N20_w_20210302090339.exe', 'pywin32-304.0-cp311-cp311-win_amd64.whl'];
const columns = ['ID', 'Internal', 'User', 'Computer', 'OS', 'Process', 'PID', 'Arch', 'Last'];
const rowVals = ['10.10.28.36', 'itsme', 'DESKTOP-NEQDIUN', 'Windows 10', 'demon_ht.exe', '1808', 'x64', '2s'];
const DATE = '#5f6f9f', W = '#eef0f4', G = '#50e070', C = '#8be9fd', Y = '#f1fa8c', R = '#ff5555';

const App = () => (
  <Screen>
    <Global />
    <LeftHost>
      <TopBar>
        <BarLeft $pad={12} $gap={40}>
          <span>Activities</span>
          <BarApp>
            <Copy size={15} color="#cfcfcf" />
            <span>Vmware</span><Caret />
          </BarApp>
        </BarLeft>
        <span>Jan 16  11:47</span>
        <BarRight $pad={14}><Network size={17} color="#ddd" /><Power size={18} color="#ddd" strokeWidth={1.5} style={{ marginLeft: 20 }} /><Caret /></BarRight>
      </TopBar>
      <HostWindow $on>
        <TitleBar $on><TitleText>testbed-new - VMware Workstation</TitleText><HostControls /></TitleBar>
        <HostToolbar />
        <TabBar $on $pad={0}>
          <HostTab $w={290}><VmTabIcon /><TabTitle $gap={8}>kali-linux-2022.3-vmware-a...</TabTitle><TabClose><CloseGlyph /></TabClose></HostTab>
          <HostTab $w={156} $active $on><VmTabIcon /><TabTitle>testbed-new</TabTitle><TabClose><CloseGlyph /></TabClose></HostTab>
        </TabBar>
        <Well $on>
          <Guest>
            <WallpaperArt viewBox="0 0 1904 902">
              <path d="M954 842L1522 675 954 360z" fill="#00a0f0" opacity=".28" />
              <path d="M1407 658L1526 675V658z" fill="#3fa6f2" />
              <path d="M1407 658L1526 675V658" fill="none" stroke="#7fdcff" strokeWidth="1.5" />
              <path d="M954 155l32 12" stroke="#5fc0f8" strokeWidth="3" opacity=".5" />
            </WallpaperArt>
            <GuestArea>
              <Firefox>
                <FfTabs>
                  <FfLogoBox><FirefoxLogo w={17} h={17} /></FfLogoBox>
                  <FfTab><span>Directory listing for /</span><X size={13} strokeWidth={1.4} /></FfTab>
                  <FfPlus><Plus size={16} strokeWidth={1.3} /></FfPlus>
                  <FfSpacer />
                  <FfCtl $mr={37}><ChevronDown size={14} strokeWidth={1.3} /></FfCtl>
                  <FfCtl><Minus size={12} strokeWidth={2} /></FfCtl>
                  <FfCtl><Square size={11} strokeWidth={1.8} /></FfCtl>
                  <FfCtl><X size={14} strokeWidth={1.3} /></FfCtl>
                </FfTabs>
                <FfNav>
                  <FfNavBtn style={{ marginLeft: 4 }}><ArrowLeft size={16} strokeWidth={1.4} /></FfNavBtn>
                  <FfNavBtn $dim><ArrowRight size={16} strokeWidth={1.4} /></FfNavBtn>
                  <FfNavBtn><RotateCw size={15} strokeWidth={1.4} /></FfNavBtn>
                  <UrlBar>
                    <Shield size={16} strokeWidth={1.4} />
                    <svg width="16" height="16" viewBox="0 0 16 16"><path d="M5 7V4.5a3 3 0 016 0V7M3.5 7h9v8h-9z" fill="none" stroke="#5b5b66" /><path d="M2 1l12 14" stroke="#e22850" strokeWidth="1.5" /></svg>
                    <UrlText>10.10.6.56<UrlPort>:8000</UrlPort></UrlText>
                    <UrlStar><Star size={16} strokeWidth={1.4} /></UrlStar>
                  </UrlBar>
                  <FfNavBtn><svg width="15" height="16" viewBox="0 0 15 16" fill="none" stroke="#5b5b66" strokeWidth="1.3"><path d="M1 2h13v5a6.5 7 0 01-13 0z" /><path d="M4.5 6l3 3 3-3" /></svg></FfNavBtn>
                  <FfNavBtn><Download size={16} strokeWidth={1.4} /></FfNavBtn>
                  <FfNavBtn><MenuIcon size={16} strokeWidth={1.4} /></FfNavBtn>
                </FfNav>
                <Page>
                  <PageTitle>Directory listing for /</PageTitle>
                  <PageRule />
                  <FileList>
                    {files.map(f => <FileItem key={f}><FileLink href="#" $seen={f === 'demon_ht.exe'}>{f}</FileLink></FileItem>)}
                  </FileList>
                  <PageRule />
                </Page>
              </Firefox>
              <Kaspersky>
                <KHead>
                  <KTitleRow>
                    <BearIcon w={16} h={14} /><span>Kaspersky Anti-Virus</span>
                    <KCtlGroup><KCtl>?</KCtl><KCtl><Minus size={11} strokeWidth={3} /></KCtl><KCtl><X size={14} strokeWidth={2} /></KCtl></KCtlGroup>
                  </KTitleRow>
                  <KHeading><ArrowLeft size={18} strokeWidth={2} /><span>File Anti-Virus settings</span></KHeading>
                </KHead>
                <KBody>
                  <KScroll />
                  <KCard>
                    <DocsIcon />
                    <KCardText>
                      <KCardName>File Anti-Virus</KCardName>
                      <KCardDesc>Scans all files that are opened, saved, or run.</KCardDesc>
                    </KCardText>
                    <KOnLabel>On</KOnLabel>
                    <KToggle><KKnob /></KToggle>
                  </KCard>
                  <KSection $top={23}>Security level</KSection>
                  <KLevels>
                    <KTrack /><KThumb />
                    <KLevel>Extreme: protection if you deal with risky sites and downloads – slows down your computer</KLevel>
                    <KLevel>Optimal: recommended for most users</KLevel>
                    <KLevel>Low: minimal protection for minimal impact on device performance</KLevel>
                  </KLevels>
                  <KSection $top={13}>Action on threat detection</KSection>
                  <KRadios>
                    <KRadioRow><KRadio $on />Select action automatically</KRadioRow>
                    <KRadioRow><KRadio />Disinfect; delete if disinfection fails</KRadioRow>
                    <KRadioRow><KRadio />Disinfect; block if disinfection fails</KRadioRow>
                    <KRadioRow><KRadio />Block</KRadioRow>
                  </KRadios>
                  <KAdvanced>Advanced Settings <ChevronDown size={14} /></KAdvanced>
                </KBody>
                <KFoot><KBtn $primary>Save</KBtn><KBtn>Cancel</KBtn></KFoot>
              </Kaspersky>
              <ShotDialog>
                <ShotHead>
                  <ShotBtn>Take Screenshot</ShotBtn>
                  <ShotMenu><MenuIcon size={14} /></ShotMenu>
                  <ShotCtl style={{ marginLeft: 10 }}><Minus size={10} strokeWidth={3} /></ShotCtl>
                  <ShotCtl><X size={12} strokeWidth={3} /></ShotCtl>
                </ShotHead>
                <ShotBody>
                  <ShotLabel>Capture Area</ShotLabel>
                  <ShotSeg>
                    <ShotOpt $on><MonitorSmall />Screen</ShotOpt>
                    <ShotOpt><WindowSmall />Window</ShotOpt>
                    <ShotOpt><SelectSmall />Selection</ShotOpt>
                  </ShotSeg>
                  <ShotList>
                    <ShotRow>Show Pointer<ShotSwitch><ShotSwitchKnob /></ShotSwitch></ShotRow>
                    <ShotRow>Delay in Seconds<ShotSpin><span>0</span><Minus size={12} style={{ marginLeft: 34 }} /><Plus size={12} /></ShotSpin></ShotRow>
                  </ShotList>
                </ShotBody>
              </ShotDialog>
              <CursorArt width="14" height="20" viewBox="0 0 14 20"><path d="M1 0v16l4-3 3 6 3-1-3-6h5z" fill="#111" stroke="#fff" strokeWidth=".8" /></CursorArt>
            </GuestArea>
            <Taskbar>
              <StartBtn><WinLogo /></StartBtn>
              <SearchBox><Search size={18} strokeWidth={1.3} style={{ transform: 'scaleX(-1)' }} /><span>Type here to search</span></SearchBox>
              <TaskView><TaskViewIcon /></TaskView>
              <TaskItem><EdgeIcon /></TaskItem>
              <TaskItem $run><ExplorerIcon /></TaskItem>
              <TaskItem><StoreWinIcon /></TaskItem>
              <TaskItem><MailIcon /></TaskItem>
              <TaskItem $run $cur><FirefoxLogo w={24} h={23} /></TaskItem>
              <TaskItem $run><PanelIcon /></TaskItem>
              <TaskItem $run><GearIcon /></TaskItem>
              <TaskItem $kas><BearIcon w={24} h={20} /></TaskItem>
              <Tray>
                <TrayBox><svg width="22" height="15" viewBox="0 0 22 15" fill="none" stroke="#222" strokeWidth="1.2"><rect x=".6" y=".6" width="20" height="13.6" /><rect x="4" y="5" width="6" height="6" /><path d="M4 3h14M12 5.5h6M12 8h6M12 10.5h6" /></svg></TrayBox>
                <TrayBox $ml={12}><ChevronUp size={13} color="#222" strokeWidth={1.3} /></TrayBox>
                <TrayBox><svg width="11" height="17" viewBox="0 0 11 17" fill="none" stroke="#222" strokeWidth="1.2"><rect x="1.5" y="4" width="6.5" height="9" rx="2" /><path d="M2.5 1h4.5M2.5 16h4.5M10 7v3" /></svg></TrayBox>
                <TrayBox><svg width="15" height="13" viewBox="0 0 15 13"><path d="M1 7c0-5 6-7 9-3 3 1 2 6-1 6H3C1 10 1 8 1 7z" fill="#555" /><circle cx="9.5" cy="8" r="4.5" fill="#fff" /><path d="M7 8a2.5 2.5 0 014-2M12 8a2.5 2.5 0 01-4 2" stroke="#1a7fd8" strokeWidth="1.2" fill="none" /></svg></TrayBox>
                <TrayBox><svg width="17" height="13" viewBox="0 0 17 13" fill="none" stroke="#222" strokeWidth="1.2"><rect x="1" y=".6" width="12" height="8" /><path d="M7 8.6v3.4M3 12.4h8M3 2v5" /></svg></TrayBox>
                <TrayBox><Volume2 size={14} color="#222" strokeWidth={1.2} /></TrayBox>
                <TrayClock><div>11:47 AM</div><div>1/16/2023</div></TrayClock>
                <TrayNote>
                  <svg width="15" height="13" viewBox="0 0 15 13"><path d="M0 0h15v9H6l-3 4V9H0z" fill="#111" /><path d="M2 3h11M2 6h11" stroke="#fff" /></svg>
                  <TrayBadge>5</TrayBadge>
                </TrayNote>
              </Tray>
            </Taskbar>
          </Guest>
        </Well>
        <StatusBar><StatusText>To return to your computer, move the mouse pointer outside or press Ctrl-Alt.</StatusText><StatusTray /></StatusBar>
      </HostWindow>
    </LeftHost>

    <HostWindow>
      <TitleBar><TitleText>Ubuntu 64-bit_Faction_Containers - VMware Workstation</TitleText><HostControls /></TitleBar>
      <HostToolbar />
      <TabBar $pad={8}>
        <HostTab $w={273} $active><VmTabIcon /><TabTitle>Ubuntu 64-bit_Faction_Cont...</TabTitle><TabClose><CloseGlyph /></TabClose></HostTab>
        <HostTab $w={283}><VmTabIcon /><TabTitle $dim>Kali-Linux-2020.2a-vmware...</TabTitle><TabClose><CloseGlyph /></TabClose></HostTab>
      </TabBar>
      <Well>
        <TopBar $dark>
          <BarLeft $pad={12} $gap={34}>
            <span>Activities</span>
            <BarApp>
              <svg width="15" height="14" viewBox="0 0 15 14"><rect x="0" y="0" width="15" height="14" rx="2" fill="#000" /><path d="M5 2v4l5-1.5V1M5 12V8l5-1.5V12" stroke="#fff" fill="none" /></svg>
              <span>Havoc</span><Caret />
            </BarApp>
          </BarLeft>
          <span>Jan 15  22:17</span>
          <BarRight $pad={15}><Network size={17} color="#eee" /><Volume2 size={17} color="#eee" /><Power size={17} color="#eee" strokeWidth={1.5} /><Caret /></BarRight>
        </TopBar>
        <UbuntuDesk>
          <Dock>
            <DockItem><DockDots><DockDot /></DockDots><FirefoxLogo w={46} h={48} /></DockItem>
            <DockItem><Thunderbird /></DockItem>
            <DockItem><DockDots><DockDot /></DockDots><FolderApp /></DockItem>
            <DockItem><SpeakerApp /></DockItem>
            <DockItem><WriterApp /></DockItem>
            <DockItem><StoreApp /></DockItem>
            <DockItem><DockDots><DockDot /><DockDot /></DockDots><TerminalApp /></DockItem>
            <DockItem><DockDots><DockDot /></DockDots><EditorApp /></DockItem>
            <DockItem><DockDots><DockDot /></DockDots><UpdaterApp /></DockItem>
            <DockItem $on><DockDots><DockDot /></DockDots><HavocApp /></DockItem>
            <AppGrid>{Array.from({ length: 9 }).map((_, i) => <AppDot key={i} />)}</AppGrid>
          </Dock>
          <Havoc>
            <HavocTitle>
              <HavocName>Havoc</HavocName>
              <HavocCtls>
                <HavocCtl><Minus size={10} strokeWidth={2} style={{ marginTop: 6 }} /></HavocCtl>
                <HavocCtl><Copy size={10} strokeWidth={1.5} /></HavocCtl>
                <HavocClose><X size={11} strokeWidth={2.4} /></HavocClose>
              </HavocCtls>
            </HavocTitle>
            <HavocMenu>{['Havoc', 'View', 'Attack', 'Scripts', 'Help'].map(m => <span key={m}>{m}</span>)}</HavocMenu>
            <TopSplit>
              <SessionPane>
                <SessionHead>{columns.map(c => <SessionHeadCell key={c}>{c}</SessionHeadCell>)}</SessionHead>
                <SessionRow>
                  <SessionCell>
                    <svg width="14" height="12" viewBox="0 0 14 12" style={{ marginLeft: 3 }}><rect x="0" y="0" width="14" height="8" fill="#1a6fc0" /><rect x="5" y="2" width="4" height="4" fill="#fff" /><rect x="0" y="8" width="14" height="1.5" fill="#ddd" /><rect x="3" y="10" width="8" height="2" fill="#bbb" /></svg>
                    <SessionIdText>721c60</SessionIdText>
                  </SessionCell>
                  {rowVals.map(v => <SessionCell key={v}>{v}</SessionCell>)}
                </SessionRow>
              </SessionPane>
              <VGrip><VGripDots /></VGrip>
              <EventPane>
                <PaneTabs><PaneTab $w={153} $pl={21} $pr={6}><span>Event Viewer</span><X size={16} strokeWidth={2} /></PaneTab></PaneTabs>
                <PaneBody>
                  <LogBox>
                    <LogLine><LogSpan $c={DATE}>16/01/2023 07:11:36 </LogSpan><LogSpan $c={C}>[</LogSpan><LogSpan $c={W}>*</LogSpan><LogSpan $c={C}>]</LogSpan><LogSpan $c={W}> Started </LogSpan><LogSpan $c={G}>"https_demon"</LogSpan><LogSpan $c={W}> listener</LogSpan></LogLine>
                    <LogLine><LogSpan $c={DATE}>16/01/2023 07:11:51 </LogSpan><LogSpan $c={C}>[</LogSpan><LogSpan $c={G}>+</LogSpan><LogSpan $c={C}>]</LogSpan><LogSpan $c={G}> Neo connected to teamserver</LogSpan></LogLine>
                    <LogLine><LogSpan $c={DATE}>16/01/2023 07:13:44 </LogSpan><LogSpan $c={C}>[</LogSpan><LogSpan $c={W}>*</LogSpan><LogSpan $c={C}>]</LogSpan><LogSpan $c={W}> Initialized </LogSpan><LogSpan $c={C}>721c60</LogSpan><LogSpan $c={W}> :: </LogSpan><LogSpan $c={Y}>itsme@10.10.28.36</LogSpan><LogSpan $c={C}> (</LogSpan><LogSpan $c={R}>DESKTOP-NEQDIUN</LogSpan><LogSpan $c={C}>)</LogSpan></LogLine>
                  </LogBox>
                </PaneBody>
              </EventPane>
            </TopSplit>
            <HGrip><HGripDots /></HGrip>
            <ChatPane>
              <PaneTabs><PaneTab $w={174} $pl={21} $pr={7}><span>Teamserver Chat</span><X size={14} strokeWidth={2} /></PaneTab></PaneTabs>
              <ChatBody>
                <ChatLog />
                <ChatInputRow><span>Neo</span><ChatInput /></ChatInputRow>
              </ChatBody>
            </ChatPane>
          </Havoc>
        </UbuntuDesk>
      </Well>
      <StatusBar><StatusText $dim>To direct input to this VM, move the mouse pointer inside or press Ctrl+G.</StatusText></StatusBar>
    </HostWindow>
  </Screen>
);

export default App;
